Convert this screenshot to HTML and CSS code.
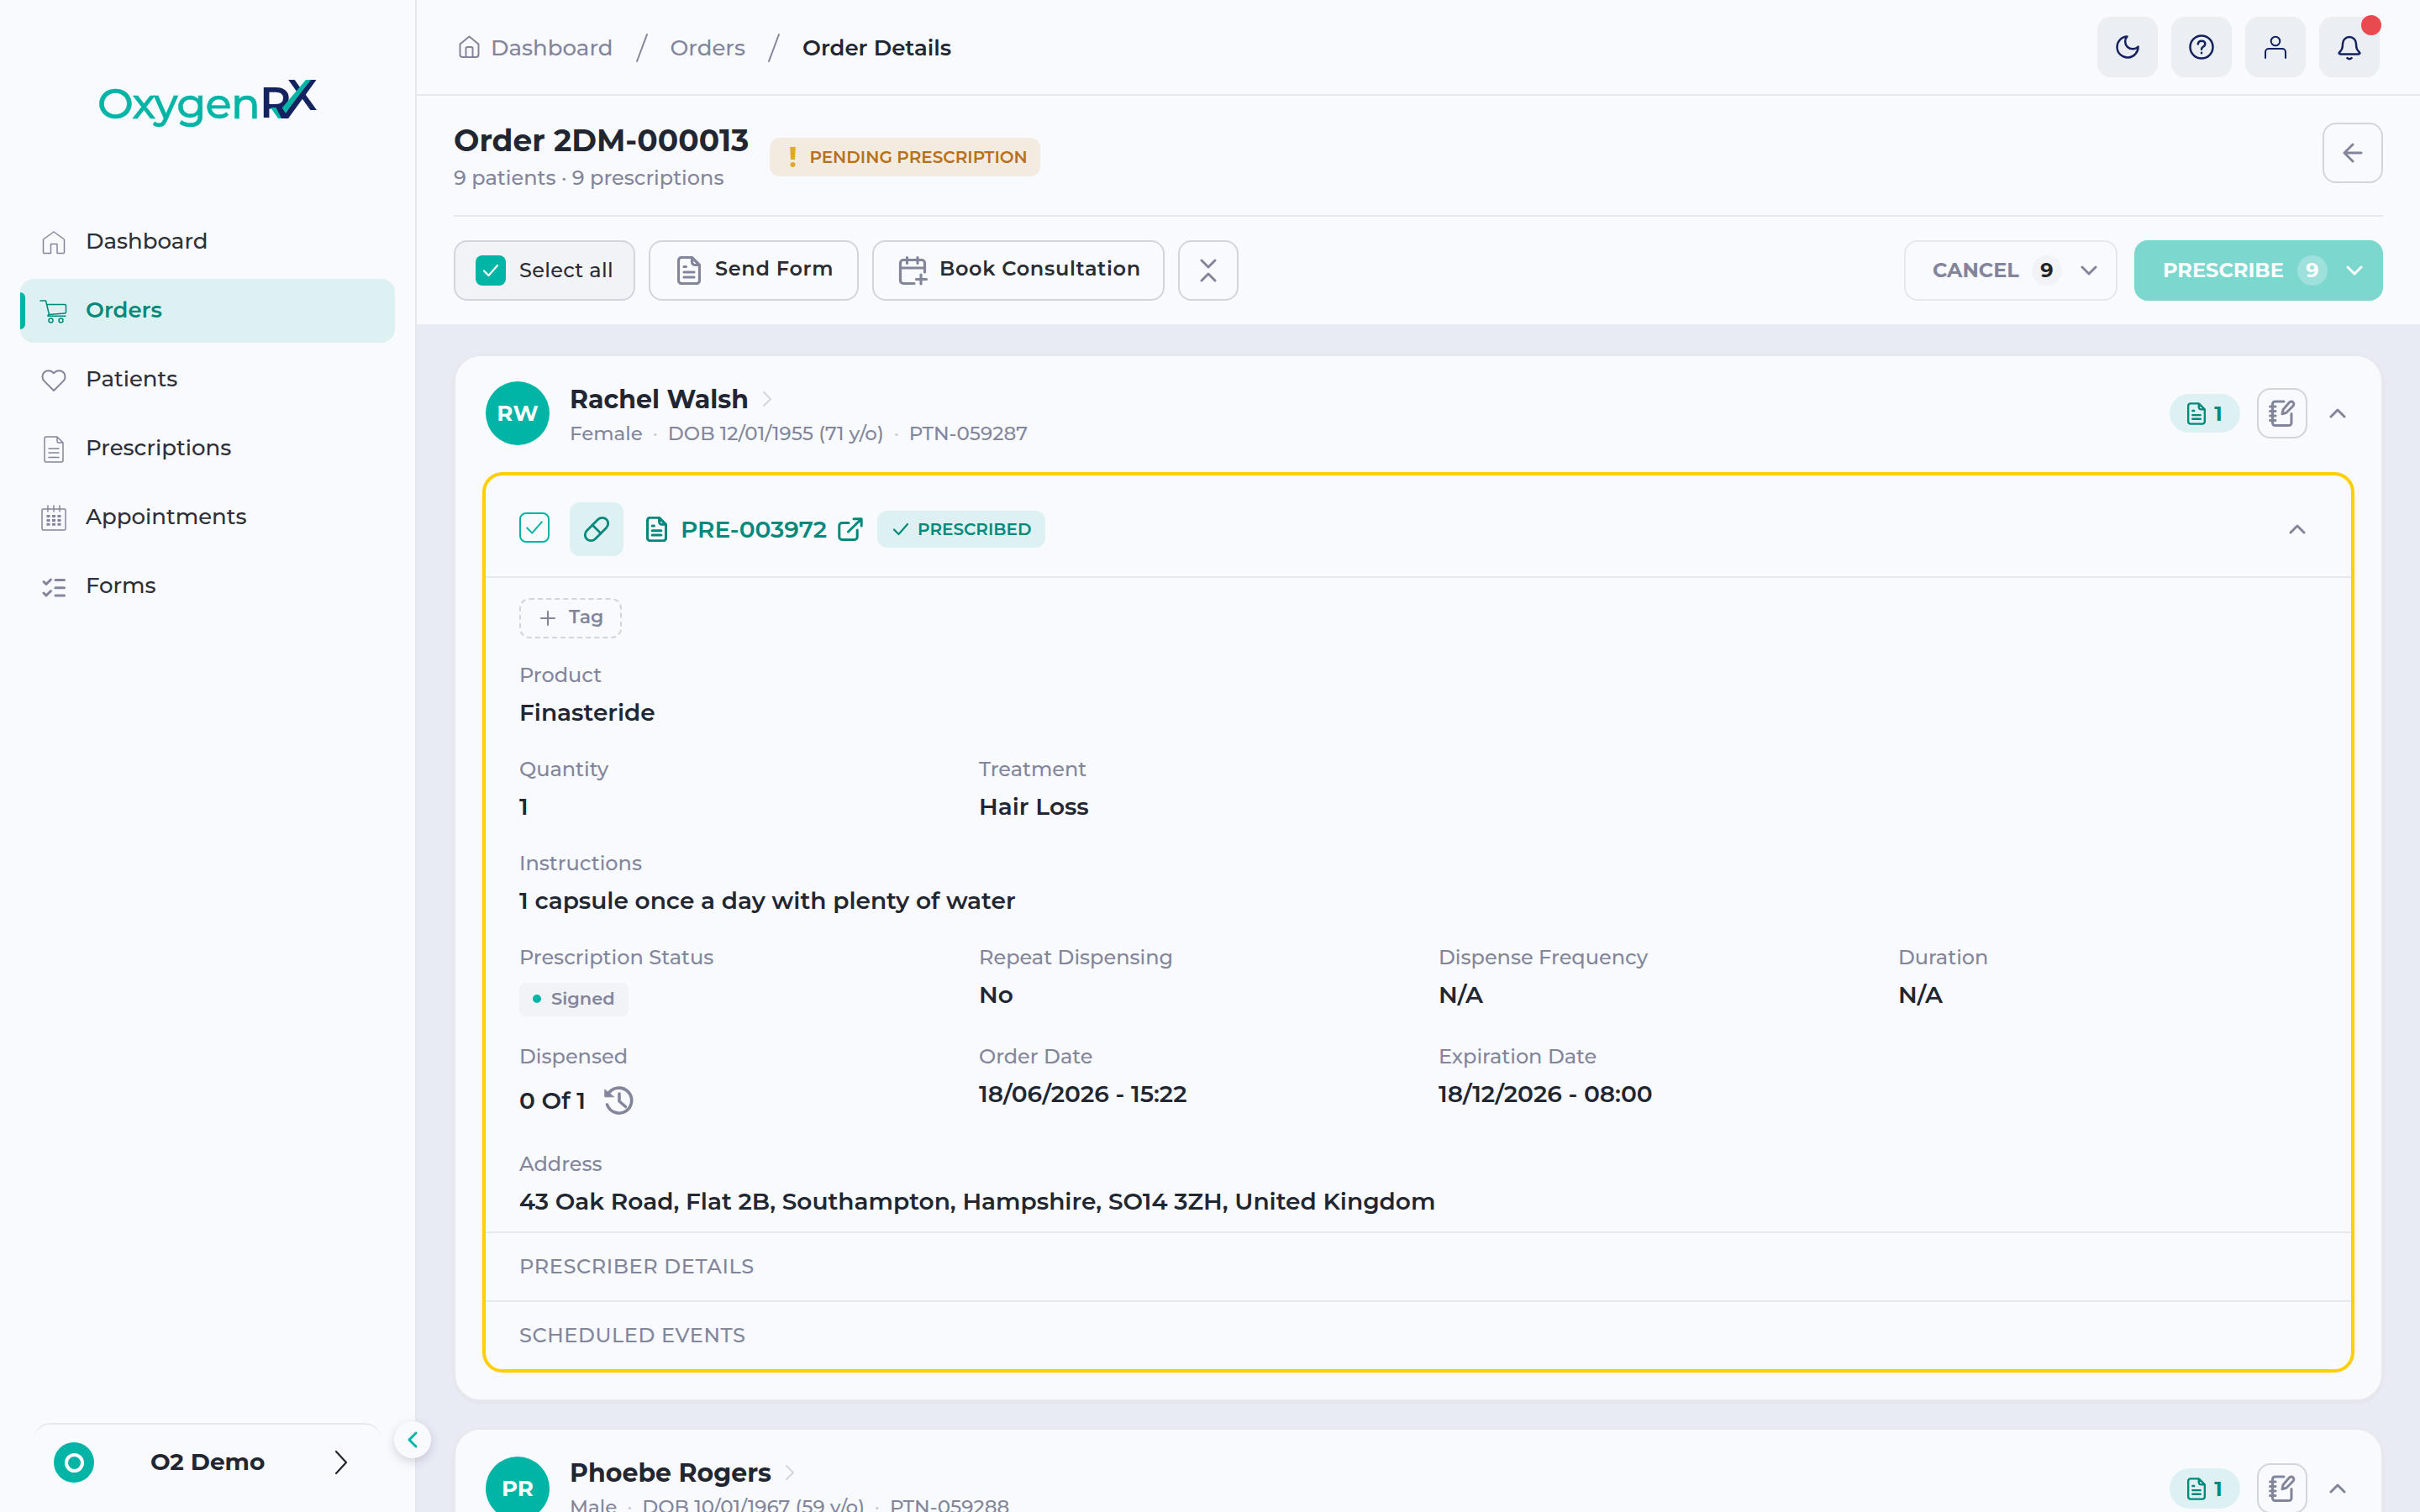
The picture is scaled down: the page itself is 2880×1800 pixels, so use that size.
FILE: index.html
```html
<!DOCTYPE html>
<html lang="en">
<head>
<meta charset="utf-8">
<title>Order Details - OxygenRX</title>
<link rel="stylesheet" href="styles.css">
</head>
<body>
<svg class="sprite" aria-hidden="true">
  <symbol id="i-doc" viewBox="0 0 28 34"><path d="M17.5 1.5H5A3.5 3.5 0 0 0 1.5 5v24A3.5 3.5 0 0 0 5 32.500h18a3.500 3.500 0 0 0 3.500-3.500V10.500zM17.500 1.500v5.500a3.500 3.500 0 0 0 3.500 3.500h5.500M8 12.500h2.500M8 19h12M8 25h12"/></symbol>
  <symbol id="i-chev-up" viewBox="0 0 20 12"><path d="M2 10l8-8 8 8"/></symbol>
  <symbol id="i-chev-down" viewBox="0 0 20 12"><path d="M2 2l8 8 8-8"/></symbol>
  <symbol id="i-chev-right" viewBox="0 0 12 20"><path d="M2 2l8 8-8 8"/></symbol>
  <symbol id="i-note" viewBox="0 0 32 32"><path d="M18 2H7.500A3 3 0 0 0 4.500 5v22.500a3 3 0 0 0 3 3H24a3 3 0 0 0 3-3V16.500M1.500 8h6.500M1.500 13.500h6.500M1.500 19h6.500M1.500 24.500h6.500M24.500 3a3 3 0 0 1 4.500 4.200l-8 8-5 1.500 1-5z"/></symbol>
  <symbol id="i-check" viewBox="0 0 20 16"><path d="M2 8.500l5.500 5.500L18 2"/></symbol>
</svg>

<div class="app">
  <aside class="sidebar">
    <div class="logo">
      <span class="logo-word">Oxygen</span><span class="logo-r">R</span><span class="logo-x">X</span>
      <svg class="logo-tick" viewBox="0 0 58 46" width="58" height="46"><path class="t" d="M3 33h7l8 13h-6z"/><path class="n" d="M50 0h7.500L24 46h-8z"/><path class="t" d="M45 0h6L18.500 42l-4-6z"/><path class="n" d="M9 32h7l6 10-3 4h-3z"/></svg>
    </div>
    <nav class="nav">
      <a class="nav-item"><svg width="28" height="28" viewBox="0 0 28 28"><path d="M1.500 25.500V10L14 1l12.500 9v15.500a1 1 0 0 1-1 1H18V15.500h-7.500v11h-8a1 1 0 0 1-1-1z"/></svg><span>Dashboard</span></a>
      <a class="nav-item active"><svg width="34" height="30" viewBox="0 0 34 30"><path d="M1 2h6.500l4 16.500L30 17a1.500 1.500 0 0 0 1.500-1.500V8A1.500 1.500 0 0 0 30 6.500H9M11.500 18.500a1.500 1.500 0 0 0-1.500 1.800h21"/><circle cx="13.500" cy="25.500" r="2.500"/><circle cx="25.500" cy="25.500" r="2.500"/></svg><span>Orders</span></a>
      <a class="nav-item"><svg width="30" height="28" viewBox="0 0 30 28"><path class="m" d="M15 26L3.600 14.600a7.300 7.300 0 0 1 0-10.300 7.300 7.300 0 0 1 10.300 0L15 5.400l1.100-1.100a7.300 7.300 0 0 1 10.300 0 7.300 7.300 0 0 1 0 10.300z"/></svg><span>Patients</span></a>
      <a class="nav-item"><svg width="24" height="32" viewBox="0 0 24 32"><path d="M16 1H3a2 2 0 0 0-2 2v26a2 2 0 0 0 2 2h18a2 2 0 0 0 2-2V8zM16 1v5.500A1.500 1.500 0 0 0 17.500 8H23M6 15h12M6 20h12M6 25.500h12"/></svg><span>Prescriptions</span></a>
      <a class="nav-item"><svg width="30" height="30" viewBox="0 0 30 30"><rect x="1" y="4" width="28" height="25" rx="1.500"/><path d="M8 0v7M15 0v7M22 0v7"/><path class="dots" d="M6.500 12.500h4M13 12.500h4M19.500 12.500h4M6.500 17.500h4M13 17.500h4M19.500 17.500h4M6.500 22.300h4M13 22.300h4M19.500 22.300h4"/></svg><span>Appointments</span></a>
      <a class="nav-item"><svg width="28" height="24" viewBox="0 0 28 24"><path class="b" d="M2 5.500l3 3L10.500 3M2 19l3 3 5.500-5.500M16 3.500h10.500M16 12.700h10.500M16 22h10.500"/></svg><span>Forms</span></a>
    </nav>
    <div class="account"><span class="account-badge"><i></i></span><b>O2 Demo</b><svg width="16" height="28" viewBox="0 0 16 28"><path d="M2 1l12 13L2 27"/></svg></div>
    <span class="collapse"><svg width="12" height="20" viewBox="0 0 12 20"><path d="M10 2l-8 8 8 8"/></svg></span>
  </aside>

  <main class="main">
    <header class="topbar">
      <div class="crumbs">
        <svg class="home" width="26" height="28" viewBox="0 0 26 28"><path d="M1.500 10.500L12.500 1.500l11 9V23a3 3 0 0 1-3 3h-16a3 3 0 0 1-3-3zM8.500 26V15.500a1.500 1.500 0 0 1 1.500-1.500h5a1.500 1.500 0 0 1 1.500 1.500V26z"/></svg>
        <span>Dashboard</span><svg class="slash" width="14" height="34" viewBox="0 0 14 34"><path d="M13 1L1 33"/></svg><span>Orders</span><svg class="slash" width="14" height="34" viewBox="0 0 14 34"><path d="M13 1L1 33"/></svg><b>Order Details</b>
      </div>
      <div class="top-actions">
        <span class="top-btn"><svg width="28" height="28" viewBox="0 0 28 28"><path d="M13.500 1.500A8.800 8.800 0 0 0 26.500 13.500 12.500 12.500 0 1 1 13.500 1.500z"/></svg></span>
        <span class="top-btn"><svg width="30" height="30" viewBox="0 0 30 30"><circle cx="15" cy="15" r="13.500"/><path d="M10.800 11.500c.3-2.600 2-3.800 4.200-3.800 2.500 0 4.300 1.500 4.300 3.700 0 3.200-4.300 3.200-4.300 6.300M15 21.800v.4"/></svg></span>
        <span class="top-btn"><svg class="user" width="28" height="28" viewBox="0 0 28 28"><circle cx="14" cy="7" r="5.300"/><path d="M2 27v-7a4 4 0 0 1 4-4h16a4 4 0 0 1 4 4v7"/></svg></span>
        <span class="top-btn"><svg width="30" height="30" viewBox="0 0 30 30"><path d="M7 11a8 8 0 0 1 16 0c0 6.500 1.500 7.500 4 10.500.9 1-.1 2-1.200 2H4.200c-1.100 0-2.100-1-1.200-2C5.500 18.500 7 17.500 7 11zM12.500 28.200a3.500 3.500 0 0 0 5 0"/></svg><i class="alert"></i></span>
      </div>
    </header>

    <section class="order-head">
      <div class="order-title"><h1>Order 2DM-000013</h1><p>9 patients · 9 prescriptions</p></div>
      <span class="status pending"><svg width="7" height="24" viewBox="0 0 7 24"><path d="M.2 0h6.600L6 15H1z"/><circle cx="3.500" cy="21" r="3"/></svg>PENDING PRESCRIPTION</span>
      <span class="btn square back"><svg width="24" height="24" viewBox="0 0 24 24"><path d="M12 2L2 12l10 10M2 12h20"/></svg></span>
    </section>

    <section class="toolbar">
      <span class="btn select"><span class="tick"><svg width="20" height="16"><use href="#i-check"/></svg></span><span class="label">Select all</span></span>
      <span class="btn send"><svg class="doc" width="28" height="34"><use href="#i-doc"/></svg><span class="lift">Send Form</span></span>
      <span class="btn book"><svg class="cal" width="34" height="34" viewBox="0 0 34 34"><path d="M18 32.500H5A3.500 3.500 0 0 1 1.500 29V8A3.500 3.500 0 0 1 5 4.500h22A3.500 3.500 0 0 1 30.500 8v11M1.500 14h29M9.500 1.500v7M22 1.500v7M26 22v11M20.500 27.500h12"/></svg><span class="lift">Book Consultation</span></span>
      <span class="btn square"><svg width="20" height="30" viewBox="0 0 20 30"><path d="M2 3l8 8 8-8M2 27l8-8 8 8"/></svg></span>
      <span class="btn cancel"><span class="label">CANCEL</span><em><span class="label">9</span></em><svg width="20" height="12"><use href="#i-chev-down"/></svg></span>
      <span class="btn prescribe"><span class="label">PRESCRIBE</span><em><span class="label">9</span></em><svg width="20" height="12"><use href="#i-chev-down"/></svg></span>
    </section>

    <section class="content">
      <article class="card">
        <div class="patient">
          <span class="avatar">RW</span>
          <div class="who"><h2>Rachel Walsh<svg width="12" height="20"><use href="#i-chev-right"/></svg></h2>
            <p><span>Female</span><i>·</i><span>DOB 12/01/1955 (71 y/o)</span><i>·</i><span>PTN-059287</span></p></div>
          <div class="tools"><span class="count"><svg width="22" height="27"><use href="#i-doc"/></svg>1</span><span class="note"><svg width="32" height="32"><use href="#i-note"/></svg></span><svg class="chev" width="20" height="12"><use href="#i-chev-up"/></svg></div>
        </div>

        <div class="rx">
          <div class="rx-head">
            <span class="box"><svg width="22" height="18" viewBox="0 0 20 16"><use href="#i-check"/></svg></span>
            <span class="pill"><svg width="32" height="32" viewBox="0 0 32 32"><rect x="9" y="-.5" width="14" height="33" rx="7" transform="rotate(45 16 16)"/><path d="M11 11l10 10"/></svg></span>
            <svg class="doc" width="25" height="30"><use href="#i-doc"/></svg>
            <strong>PRE-003972</strong>
            <svg class="ext" width="30" height="28" viewBox="0 0 30 28"><path d="M13 6.500H5A3.200 3.200 0 0 0 1.800 9.700v13.500A3.200 3.200 0 0 0 5 26.400h15a3.200 3.200 0 0 0 3.200-3.200V15M19 1.800h9.200V10M28 2L12.500 17"/></svg>
            <span class="status done"><svg width="20" height="16"><use href="#i-check"/></svg>PRESCRIBED</span>
            <svg class="chev" width="20" height="12"><use href="#i-chev-up"/></svg>
          </div>
          <div class="rx-body">
            <span class="tag"><svg width="18" height="18" viewBox="0 0 18 18"><path d="M9 1v16M1 9h16"/></svg><span class="label">Tag</span></span>
            <dl>
              <div class="wide"><dt>Product</dt><dd>Finasteride</dd></div>
              <div><dt>Quantity</dt><dd>1</dd></div>
              <div class="rest"><dt>Treatment</dt><dd>Hair Loss</dd></div>
              <div class="wide"><dt>Instructions</dt><dd>1 capsule once a day with plenty of water</dd></div>
              <div><dt>Prescription Status</dt><dd><span class="signed">Signed</span></dd></div>
              <div><dt>Repeat Dispensing</dt><dd>No</dd></div>
              <div><dt>Dispense Frequency</dt><dd>N/A</dd></div>
              <div><dt>Duration</dt><dd>N/A</dd></div>
              <div><dt>Dispensed</dt><dd class="dispensed">0 Of 1<svg width="36" height="36" viewBox="0 0 36 36"><path d="M3.500 23a15 15 0 1 0 1-12M18 10v9l7.500 6.500"/><path class="head" d="M.8 5.500v8.300h10.500z"/></svg></dd></div>
              <div><dt>Order Date</dt><dd>18/06/2026 - 15:22</dd></div>
              <div class="rest2"><dt>Expiration Date</dt><dd>18/12/2026 - 08:00</dd></div>
              <div class="wide"><dt>Address</dt><dd>43 Oak Road, Flat 2B, Southampton, Hampshire, SO14 3ZH, United Kingdom</dd></div>
            </dl>
          </div>
          <div class="rx-section">PRESCRIBER DETAILS</div>
          <div class="rx-section">SCHEDULED EVENTS</div>
        </div>
      </article>

      <article class="card second">
        <div class="patient">
          <span class="avatar">PR</span>
          <div class="who"><h2>Phoebe Rogers<svg width="12" height="20"><use href="#i-chev-right"/></svg></h2>
            <p><span>Male</span><i>·</i><span>DOB 10/01/1967 (59 y/o)</span><i>·</i><span>PTN-059288</span></p></div>
          <div class="tools"><span class="count"><svg width="22" height="27"><use href="#i-doc"/></svg>1</span><span class="note"><svg width="32" height="32"><use href="#i-note"/></svg></span><svg class="chev" width="20" height="12"><use href="#i-chev-up"/></svg></div>
        </div>
      </article>
    </section>
  </main>
</div>
</body>
</html>
```
FILE: styles.css
```css
* { box-sizing: border-box; }

:root {
  --teal: #00b5a5;
  --teal-dark: #00897b;
  --teal-soft: #ddf1f2;
  --navy: #14235f;
  --ink: #222631;
  --muted: #83869b;
  --line: #e6e8ec;
  --edge: #d4d4df;
  --surface: #f8fafe;
  --page: #e8ebf4;
}

body {
  margin: 0;
  background: var(--page);
  color: var(--ink);
  font-family: Montserrat, Inter, sans-serif;
  font-size: 24px;
}

svg {
  flex: none;
  fill: none;
  stroke: currentColor;
  stroke-width: 3;
  stroke-linecap: round;
  stroke-linejoin: round;
  overflow: visible;
}

h1, h2, p, dl, dd { margin: 0; }
i, em { font-style: normal; }
.sprite { position: absolute; width: 0; height: 0; }

.app { display: flex; height: 1800px; overflow: hidden; }

/* Sidebar */
.sidebar {
  position: relative;
  display: flex;
  flex: none;
  flex-direction: column;
  width: 496px;
  border-right: 2px solid var(--line);
  background: var(--surface);
}

.logo {
  position: relative;
  height: 250px;
  padding: 91px 0 0 116px;
  line-height: 64px;
  white-space: nowrap;
}
.logo-word { color: var(--teal); font-size: 51px; font-weight: 500; letter-spacing: -.8px; -webkit-text-stroke: .5px var(--teal); }
.logo-r { position: absolute; left: 309px; top: 90px; color: var(--navy); font-size: 51px; font-weight: 600; }
.logo-x { position: absolute; left: 342px; top: 81px; color: var(--navy); font-size: 51px; font-weight: 600; }
.logo-tick { position: absolute; left: 319px; top: 95px; stroke: none; }
.logo-tick .t { fill: var(--teal); }
.logo-tick .n { fill: var(--navy); }

.nav { display: flex; flex-direction: column; gap: 6px; padding: 0 24px; }
.nav-item {
  position: relative;
  display: grid;
  grid-template-columns: 80px 1fr;
  align-items: center;
  height: 76px;
  color: #2e3036;
  border-radius: 16px;
  font-size: 26px;
  font-weight: 500;
}
.nav-item span { margin: 0 0 3px -2px; }
.nav-item svg { justify-self: center; margin-top: 2px; color: var(--muted); stroke-width: 1.500; }
.nav-item svg .m { stroke-width: 2; }
.nav-item svg .b { stroke-width: 3; }
.nav-item svg .dots { stroke-width: 3; stroke-linecap: butt; }
.nav-item.active { background: var(--teal-soft); color: var(--teal-dark); font-weight: 600; }
.nav-item.active svg { color: var(--teal-dark); }
.nav-item.active::before {
  content: "";
  position: absolute;
  left: 0;
  top: 16px;
  width: 6px;
  height: 44px;
  border-radius: 0 6px 6px 0;
  background: var(--teal);
}

.account {
  display: flex;
  align-items: center;
  height: 106px;
  margin: auto 40px 0;
  padding: 0 40px 14px 24px;
  border-top: 2px solid var(--line);
  border-radius: 20px 20px 0 0;
  font-size: 28px;
}
.account b { margin: 0 0 2px 67px; }
.account svg { margin-left: auto; stroke-width: 2.200; }
.account-badge { display: grid; place-items: center; width: 48px; height: 48px; border-radius: 50%; background: var(--teal); }
.account-badge i { width: 23px; height: 23px; border: 4px solid #fff; border-radius: 50%; }

.collapse {
  position: absolute;
  right: -19px;
  top: 1692px;
  display: grid;
  place-items: center;
  width: 44px;
  height: 44px;
  border-radius: 50%;
  background: var(--surface);
  color: var(--teal);
  box-shadow: 0 4px 12px rgba(40, 45, 80, .18);
}

/* Top bar */
.main { flex: 1; min-width: 0; }
.topbar {
  display: flex;
  justify-content: space-between;
  align-items: center;
  height: 114px;
  padding: 0 48px;
  border-bottom: 2px solid var(--line);
  background: var(--surface);
}
.crumbs { display: flex; align-items: center; padding-top: 2px; color: var(--muted); font-size: 26px; font-weight: 500; }
.crumbs .home { margin: 0 12px 2px 2px; stroke-width: 2; }
.crumbs .slash { margin: 0 27px 0 27px; stroke-width: 2; }
.crumbs b { color: var(--ink); font-weight: 600; }
.top-actions { display: flex; gap: 16px; }
.top-btn {
  position: relative;
  display: grid;
  place-items: center;
  width: 72px;
  height: 72px;
  border-radius: 16px;
  background: #ebeef3;
  color: var(--navy);
}
.top-btn svg { stroke-width: 2.500; }
.top-btn .user { stroke-width: 2; }
.alert { position: absolute; right: -2px; top: -2px; width: 24px; height: 24px; border-radius: 50%; background: #e84a50; }

/* Order heading */
.order-head {
  display: flex;
  height: 144px;
  padding: 32px 44px 0;
  background: var(--surface);
}
.order-title h1 { font-size: 36px; font-weight: 700; line-height: 42px; white-space: nowrap; }
.order-title p { margin-top: 7px; color: var(--muted); font-weight: 500; line-height: 34px; }
.status {
  display: flex;
  align-items: center;
  height: 46px;
  border-radius: 12px;
  font-size: 20px;
  font-weight: 600;
}
.pending { margin: 18px 0 0 25px; padding: 0 15px 0 24px; gap: 16px; background: #f4ebe0; color: #b7711c; }
.pending svg { fill: #deac23; stroke: none; }
.back { margin-left: auto; }

/* Toolbar */
.toolbar {
  position: relative;
  display: flex;
  gap: 16px;
  height: 128px;
  padding: 28px 44px;
  background: var(--surface);
}
.toolbar::before { content: ""; position: absolute; left: 44px; right: 44px; top: -2px; height: 2px; background: var(--line); }
.btn {
  display: flex;
  align-items: center;
  height: 72px;
  padding: 0 22px 0 32px;
  border: 2px solid var(--edge);
  border-radius: 16px;
  color: #2a2c33;
  font-weight: 600;
  white-space: nowrap;
}
.btn svg { color: var(--muted); }
.btn.square { width: 72px; padding: 0; justify-content: center; }
.btn .doc, .btn .cal { stroke-width: 3.200; }
.btn .doc { margin-right: 17px; }
.btn .cal { margin: 0 14px 0 -2px; }
.label { padding-bottom: 2px; }
.lift { padding-bottom: 5px; letter-spacing: .65px; }
.btn.select { width: 216px; padding: 0 0 0 24px; background: #f2f3f7; font-weight: 500; letter-spacing: .3px; }
.send { width: 250px; }
.btn.book { width: 348px; }
.tick { display: grid; place-items: center; width: 36px; height: 36px; margin-right: 16px; border-radius: 8px; background: var(--teal); }
.tick svg { color: #fff; stroke-width: 2.200; }
.btn em { display: grid; place-items: center; width: 36px; height: 36px; margin: 0 22px 0 auto; border-radius: 50%; font-weight: 700; background: #f2f3f7; color: #22242b; }
.btn.cancel { width: 254px; margin-left: auto; border-color: var(--line); color: var(--muted); font-weight: 700; }
.btn.prescribe { width: 296px; margin-left: 4px; padding: 0 24px 0 34px; border: 0; background: #7cd7cf; color: #fff; font-weight: 700; }
.btn.prescribe svg { color: #fff; }
.btn.prescribe em { background: #9ee0db; color: #fff; }

/* Patient cards */
.content { padding: 36px 44px; }
.card {
  height: 1246px;
  margin-bottom: 32px;
  padding: 0 32px;
  border: 2px solid #e8e9ed;
  border-radius: 32px;
  background: var(--surface);
  box-shadow: 0 2px 4px rgba(40, 45, 80, .04);
}
.patient { display: flex; height: 138px; padding: 30px 10px 0 4px; }
.avatar {
  display: grid;
  place-items: center;
  width: 76px;
  height: 76px;
  border-radius: 50%;
  background: var(--teal);
  color: #fff;
  font-size: 26px;
  font-weight: 700;
}
.who { margin: 2px 0 0 24px; }
.who h2 { display: flex; align-items: center; gap: 16px; font-size: 30px; font-weight: 700; line-height: 40px; }
.who h2 svg { margin-bottom: 2px; color: #d4d5dd; stroke-width: 2; }
.who p { display: flex; margin-top: 2px; color: var(--muted); font-size: 23px; font-weight: 500; line-height: 36px; }
.who p i { width: 30px; text-align: center; color: #c8cad6; }
.tools { display: flex; align-items: center; height: 60px; margin: 8px 0 0 auto; }
.count {
  display: flex;
  align-items: center;
  justify-content: center;
  width: 84px;
  height: 46px;
  gap: 10px;
  border-radius: 24px;
  background: var(--teal-soft);
  color: var(--teal-dark);
  font-weight: 700;
}
.note { display: grid; place-items: center; width: 60px; height: 60px; margin: 0 26px 0 20px; border: 2px solid var(--edge); border-radius: 16px; color: var(--muted); }
.chev { color: var(--muted); }
.second .avatar { margin-top: 2px; }
.second .tools { margin-top: 10px; }
.second .count { height: 48px; }

/* Prescription */
.rx { height: 1072px; border: 4px solid #ffcf00; border-radius: 24px; }
.rx-head {
  display: flex;
  align-items: center;
  height: 122px;
  padding: 8px 54px 0 40px;
  border-bottom: 2px solid var(--line);
}
.box { display: grid; place-items: center; width: 36px; height: 36px; margin-top: -4px; border: 2.500px solid var(--teal); border-radius: 8px; color: var(--teal); }
.box svg { stroke-width: 1.800; }
.pill { display: grid; place-items: center; width: 64px; height: 64px; margin: 0 27px 0 24px; border-radius: 12px; background: var(--teal-soft); color: var(--teal-dark); }
.pill svg { stroke-width: 2.800; }
.rx-head .doc, .ext { color: var(--teal-dark); }
.rx-head .doc { margin-right: 16px; stroke-width: 3.500; }
.rx-head strong { color: var(--teal-dark); font-size: 28px; font-weight: 600; }
.ext { margin: 0 17px 0 13px; }
.done { height: 44px; padding: 0 16px 0 18px; gap: 10px; background: var(--teal-soft); color: var(--teal-dark); }
.done svg { stroke-width: 2.200; }
.rx-head .chev { margin-left: auto; }
.rx-body { height: 778px; padding: 24px 40px 0; }
.tag {
  display: inline-flex;
  align-items: center;
  width: 122px;
  height: 48px;
  padding-left: 23px;
  gap: 16px;
  border: 2px dashed var(--edge);
  border-radius: 12px;
  color: var(--muted);
  font-size: 22px;
  font-weight: 600;
}
.tag svg { stroke-width: 2; }
.tag .label { padding-bottom: 3px; }
dl { display: grid; grid-template-columns: repeat(4, 1fr); column-gap: 48px; row-gap: 34px; margin-top: 28px; }
.wide { grid-column: 1 / -1; }
.rest { grid-column: 2 / -1; }
.rest2 { grid-column: 3 / -1; }
dt { color: var(--muted); font-weight: 500; line-height: 32px; white-space: nowrap; }
dd { margin-top: 10px; font-size: 28px; font-weight: 600; line-height: 36px; white-space: nowrap; }
.dispensed { display: flex; align-items: center; gap: 22px; height: 52px; }
.dispensed svg { color: var(--muted); stroke-width: 3.600; }
.dispensed .head { fill: currentColor; stroke-width: 1; }
.signed {
  display: flex;
  align-items: center;
  gap: 12px;
  width: 130px;
  height: 40px;
  margin: 14px 0 -2px;
  padding: 0 16px 2px;
  border-radius: 8px;
  background: #f2f3f7;
  color: var(--muted);
  font-size: 21px;
  font-weight: 600;
}
.signed::before { content: ""; width: 10px; height: 10px; border-radius: 50%; background: var(--teal); }
.rx-section { height: 82px; padding-left: 40px; border-top: 2px solid var(--line); color: var(--muted); font-weight: 500; letter-spacing: .6px; line-height: 80px; }
```
